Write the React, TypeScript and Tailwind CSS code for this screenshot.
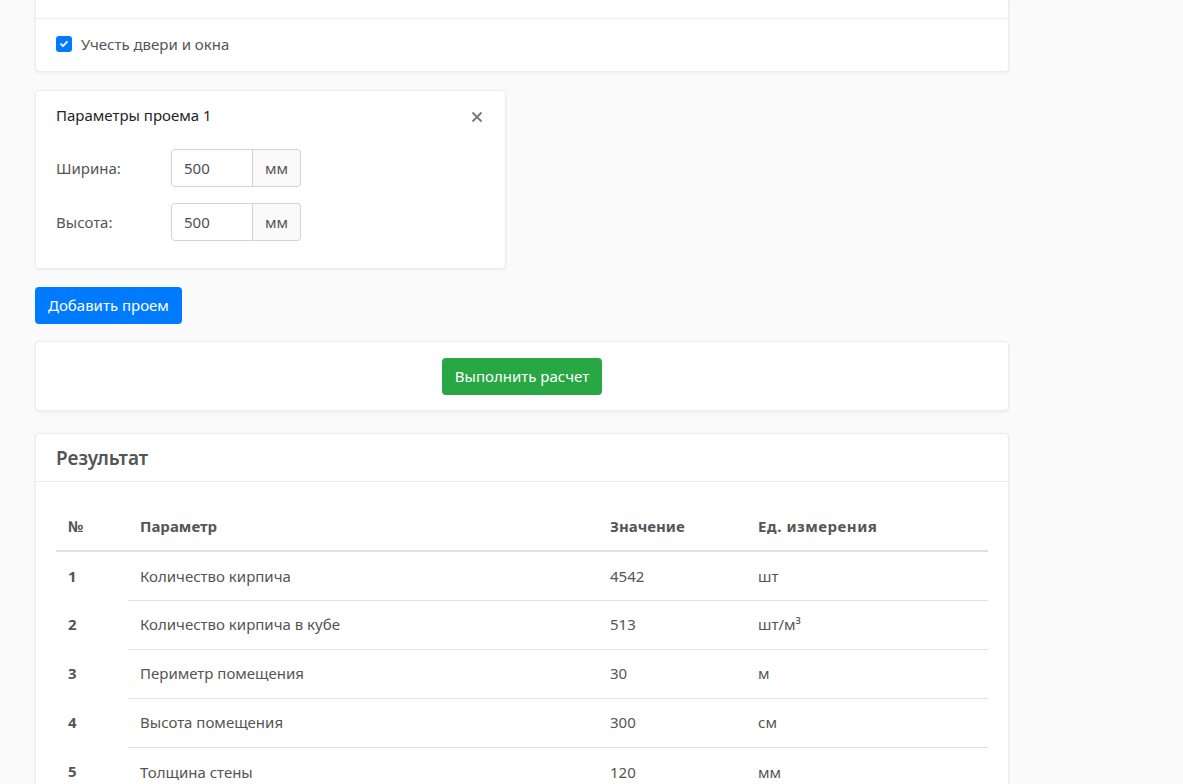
import React from "react";

const rows = [
  ["1", "Количество кирпича", "4542", "шт"],
  ["2", "Количество кирпича в кубе", "513", "шт/м³"],
  ["3", "Периметр помещения", "30", "м"],
  ["4", "Высота помещения", "300", "см"],
  ["5", "Толщина стены", "120", "мм"],
];

const card = "bg-white rounded-[4px] border border-[#ececec] shadow-[0_1px_3px_rgba(0,0,0,0.06)]";

function Field({ label }: { label: string }) {
  return (
    <div className="flex items-center">
      <div className="w-[115px] text-[15px] text-[#555]">{label}</div>
      <div className="flex h-[38px]">
        <div className="w-[82px] border border-[#ced4da] rounded-l-[4px] bg-white flex items-center pl-[12px] text-[15px] text-[#495057]">500</div>
        <div className="w-[48px] border border-l-0 border-[#ced4da] rounded-r-[4px] bg-[#fafafa] flex items-center justify-center text-[15px] text-[#555]">мм</div>
      </div>
    </div>
  );
}

export default function App() {
  return (
    <div className="min-h-[784px] bg-[#fafafa] pl-[35px] w-[1183px] overflow-hidden" style={{ fontFamily: '"Noto Sans", "Open Sans", sans-serif' }}>
      <div className="w-[974px] flex flex-col">
        <div className={`${card} border-t-0 rounded-t-none`}>
          <div className="h-[19px] border-b border-[#ececec]" />
          <div className="flex items-center gap-[9px] pl-[20px] h-[52px] pb-[2px]">
            <div className="w-[16px] h-[16px] rounded-[3px] bg-[#007bff] flex items-center justify-center">
              <svg width="10" height="10" viewBox="0 0 10 10"><path d="M2 5.2 L4 7.2 L8 2.8" stroke="white" strokeWidth="1.8" fill="none" strokeLinecap="round" strokeLinejoin="round" /></svg>
            </div>
            <span className="text-[15px] text-[#555]">Учесть двери и окна</span>
          </div>
        </div>

        <div className={`${card} w-[471px] mt-[18px] px-[20px] pt-[12px] pb-[27px]`}>
          <div className="flex items-center justify-between h-[24px]">
            <span className="text-[15px] text-[#212529]">Параметры проема 1</span>
            <svg width="12" height="12" viewBox="0 0 12 12" className="mr-[2px] mt-[4px]"><path d="M1.5 1.5 L10.5 10.5 M10.5 1.5 L1.5 10.5" stroke="#7a7a7a" strokeWidth="2" /></svg>
          </div>
          <div className="mt-[22px] flex flex-col gap-[16px]">
            <Field label="Ширина:" />
            <Field label="Высота:" />
          </div>
        </div>

        <div className="mt-[18px]">
          <button className="h-[37px] px-[13px] rounded-[4px] bg-[#007bff] text-white text-[15px]">Добавить проем</button>
        </div>

        <div className={`${card} mt-[17px] h-[70px] flex items-center justify-center`}>
          <button className="h-[37px] px-[13px] rounded-[4px] bg-[#28a745] text-white text-[15px]">Выполнить расчет</button>
        </div>

        <div className={`${card} mt-[22px]`}>
          <div className="h-[48px] border-b border-[#ececec] flex items-center pl-[20px] pt-[2px]">
            <span className="text-[19px] font-semibold text-[#555]">Результат</span>
          </div>
          <div className="px-[20px] pt-[20px]">
            <table className="w-full border-collapse text-[15px] text-[#555]">
              <thead>
                <tr className="border-b-2 border-[#dee2e6] h-[49px]">
                  <th className="w-[72px] text-left font-bold pl-[12px]">№</th>
                  <th className="w-[470px] text-left font-bold pl-[12px]">Параметр</th>
                  <th className="w-[148px] text-left font-bold pl-[12px]">Значение</th>
                  <th className="text-left font-bold pl-[12px] tracking-[0.5px]">Ед. измерения</th>
                </tr>
              </thead>
              <tbody>
                {rows.map((r, i) => (
                  <tr key={i} className="h-[49px]">
                    <td className="pl-[12px] font-bold">{r[0]}</td>
                    <td className={`pl-[12px] ${i < rows.length - 1 ? "border-b border-[#dee2e6]" : ""}`}>{r[1]}</td>
                    <td className={`pl-[12px] ${i < rows.length - 1 ? "border-b border-[#dee2e6]" : ""}`}>{r[2]}</td>
                    <td className={`pl-[12px] ${i < rows.length - 1 ? "border-b border-[#dee2e6]" : ""}`}>{r[3]}</td>
                  </tr>
                ))}
              </tbody>
            </table>
          </div>
        </div>
      </div>
    </div>
  );
}
